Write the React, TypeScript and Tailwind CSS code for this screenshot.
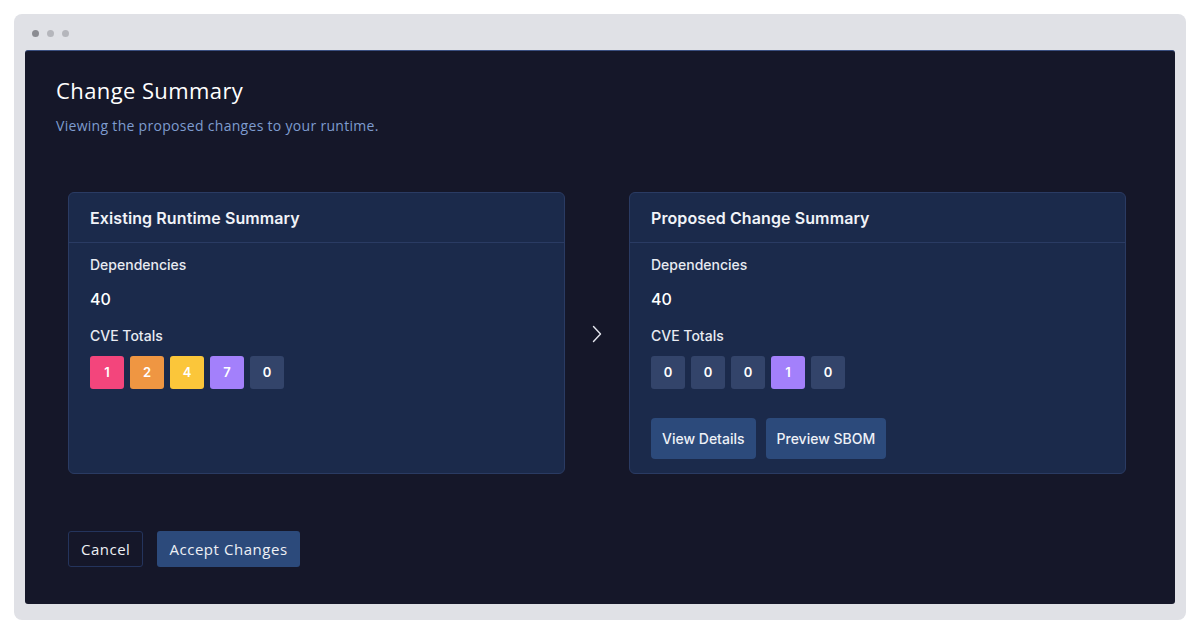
import React from "react";

const heading = { fontFamily: '"Open Sans", "Noto Sans", sans-serif' };
const body = { fontFamily: 'Inter, "Noto Sans", sans-serif' };

function Badge({ value, color }: { value: number; color: string }) {
  return (
    <div
      className={`w-[34px] h-[33px] rounded-[3px] flex items-center justify-center text-white text-[13px] font-semibold ${color}`}
    >
      {value}
    </div>
  );
}

function Card({
  title,
  badges,
  actions,
}: {
  title: string;
  badges: { value: number; color: string }[];
  actions?: boolean;
}) {
  return (
    <div className="w-[497px] bg-[#1b2a4b] border border-[#2a3b63] rounded-[6px] flex flex-col text-white" style={body}>
      <div className="h-[50px] px-[21px] flex items-center border-b border-[#2a3b63]">
        <span className="text-[16px] font-semibold tracking-[0.1px] text-[#f1f3f8]">{title}</span>
      </div>
      <div className="px-[21px] pt-[12px] pb-[14px] flex flex-col">
        <div className="text-[14px] font-medium leading-[20px] text-[#e8ebf2]">Dependencies</div>
        <div className="mt-[12px] text-[16px] font-medium leading-[24px]">40</div>
        <div className="mt-[15px] text-[14px] font-medium leading-[20px] text-[#e8ebf2]">CVE Totals</div>
        <div className="mt-[10px] flex gap-[6px]">
          {badges.map((b, i) => (
            <Badge key={i} value={b.value} color={b.color} />
          ))}
        </div>
        {actions && (
          <div className="mt-[29px] flex gap-[10px]">
            <button className="h-[41px] px-[11px] rounded-[4px] bg-[#2c4a7b] text-[14px] font-medium text-[#eef1f7]">
              View Details
            </button>
            <button className="h-[41px] px-[11px] rounded-[4px] bg-[#2c4a7b] text-[14px] font-medium text-[#eef1f7]">
              Preview SBOM
            </button>
          </div>
        )}
      </div>
    </div>
  );
}

export default function App() {
  const gray = "bg-[#33446a]";
  return (
    <div className="w-[1200px] h-[634px] bg-white p-[14px]">
      <div className="w-full h-full bg-[#e0e1e6] rounded-[8px] px-[11px] pb-[16px] flex flex-col">
        <div className="h-[36px] flex items-center gap-[8px] pl-[7px] pt-[3px]">
          <span className="w-[7px] h-[7px] rounded-full bg-[#8b8c92]" />
          <span className="w-[7px] h-[7px] rounded-full bg-[#b5b6bc]" />
          <span className="w-[7px] h-[7px] rounded-full bg-[#b5b6bc]" />
        </div>
        <div className="flex-1 bg-[#151729] rounded-[3px] border-t border-[#3a4f80] flex flex-col px-[31px] pt-[25px]">
          <h1 className="text-[22px] leading-[28px] font-medium tracking-[0.4px] text-white" style={heading}>
            Change Summary
          </h1>
          <p className="mt-[12px] text-[14px] leading-[20px] tracking-[0.3px] text-[#7e9ccf]" style={heading}>
            Viewing the proposed changes to your runtime.
          </p>
          <div className="mt-[56px] ml-[12px] flex items-stretch">
            <Card
              title="Existing Runtime Summary"
              badges={[
                { value: 1, color: "bg-[#f3457c]" },
                { value: 2, color: "bg-[#ef9642]" },
                { value: 4, color: "bg-[#fbc63a]" },
                { value: 7, color: "bg-[#a380fb]" },
                { value: 0, color: gray },
              ]}
            />
            <div className="w-[64px] flex items-center justify-center pt-[2px]">
              <svg width="10" height="18" viewBox="0 0 10 18" fill="none">
                <path d="M1.5 1.5 L8.5 9 L1.5 16.5" stroke="#e4e6ee" strokeWidth="1.4" strokeLinecap="round" strokeLinejoin="round" />
              </svg>
            </div>
            <Card
              title="Proposed Change Summary"
              actions
              badges={[
                { value: 0, color: gray },
                { value: 0, color: gray },
                { value: 0, color: gray },
                { value: 1, color: "bg-[#a380fb]" },
                { value: 0, color: gray },
              ]}
            />
          </div>
          <div className="mt-[57px] ml-[12px] flex gap-[14px]" style={heading}>
            <button className="h-[36px] px-[12px] rounded-[3px] border border-[#24345c] text-[15px] font-medium tracking-[0.5px] text-[#eef0f5]">
              Cancel
            </button>
            <button className="h-[36px] px-[12px] rounded-[3px] bg-[#2c4a7b] text-[15px] font-medium tracking-[0.55px] text-[#eef0f5]">
              Accept Changes
            </button>
          </div>
        </div>
      </div>
    </div>
  );
}
